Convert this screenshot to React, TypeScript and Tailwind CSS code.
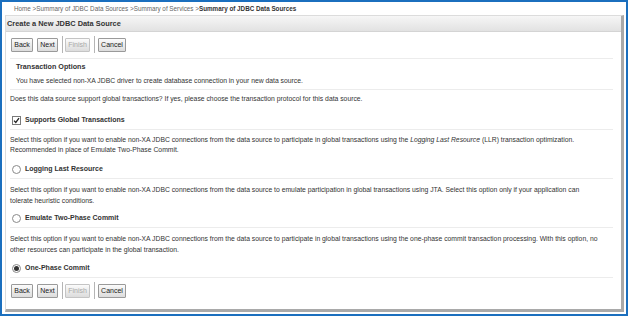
import React from "react";

const Btn = ({ label, w, disabled }: { label: string; w: string; disabled?: boolean }) => (
  <div
    className={`${w} h-[14px] flex items-center justify-center border border-[#9a9a9a] rounded-[1px] bg-gradient-to-b from-[#fbfbfb] to-[#dcdcdc] text-[7px] ${
      disabled ? "text-[#a8a8a8] border-[#c4c4c4]" : "text-[#222]"
    }`}
  >
    {label}
  </div>
);

const Sep = ({ cls }: { cls: string }) => <div className={`w-px h-[17px] bg-[#b5b5b5] ${cls}`} />;

const Buttons = () => (
  <div className="flex items-center pl-[1px]">
    <Btn label="Back" w="w-[22px]" />
    <div className="w-[4px]" />
    <Btn label="Next" w="w-[21px]" />
    <Sep cls="ml-[4px] mr-[2px]" />
    <Btn label="Finish" w="w-[25px]" disabled />
    <Sep cls="ml-[4px] mr-[3px]" />
    <Btn label="Cancel" w="w-[28px]" />
  </div>
);

const Radio = ({ checked }: { checked?: boolean }) => (
  <div className="w-[9px] h-[9px] rounded-full border border-[#8a8a8a] bg-white flex items-center justify-center">
    {checked && <div className="w-[5px] h-[5px] rounded-full bg-[#333]" />}
  </div>
);

const Line = ({ mt }: { mt: string }) => <div className={`${mt} h-px bg-[#ececec] mr-[4px]`} />;

export default function App() {
  return (
    <div
      className="w-[628px] h-[316px] border-2 border-[#1b6fbe] bg-white overflow-hidden text-[#333]"
      style={{ fontFamily: '"Liberation Sans", Arial, sans-serif' }}
    >
      <div className="h-[13px] pl-[12px] flex items-center text-[6.3px] text-[#666]">
        Home &gt;Summary of JDBC Data Sources &gt;Summary of Services &gt;
        <span className="font-bold text-[#333]">Summary of JDBC Data Sources</span>
      </div>
      <div className="ml-[3px] mr-[2px] h-[297px] border-t border-l border-[#dcdcdc] border-r-[3px] border-r-[#a9a9a9] border-b-[3px] border-b-[#a9a9a9] flex flex-col">
        <div className="h-[16px] shrink-0 bg-gradient-to-b from-[#f6f6f6] to-[#e2e2e2] border-b border-[#d4d4d4] flex items-center pl-[1px] text-[7.4px] font-bold text-[#333]">
          Create a New JDBC Data Source
        </div>
        <div className="px-[4px] text-[6.8px] leading-[10px]">
          <div className="mt-[4px]">
            <Buttons />
          </div>
          <Line mt="mt-[5px]" />
          <div className="mt-[3px] pl-[6px] font-bold text-[7.2px]">Transaction Options</div>
          <div className="mt-[4px] pl-[6px]">
            You have selected non-XA JDBC driver to create database connection in your new data source.
          </div>
          <Line mt="mt-[3px]" />
          <div className="mt-[4px]">
            Does this data source support global transactions? If yes, please choose the transaction protocol for this data source.
          </div>
          <div className="mt-[11px] h-[10px] flex items-center gap-[4px] pl-[2px] font-bold text-[7px]">
            <div className="w-[9px] h-[9px] border border-[#7a7a7a] bg-white flex items-center justify-center">
              <svg width="7" height="7" viewBox="0 0 7 7">
                <path d="M1 3.6 L2.8 5.5 L6 1.2" fill="none" stroke="#222" strokeWidth="1.3" />
              </svg>
            </div>
            Supports Global Transactions
          </div>
          <Line mt="mt-[4px]" />
          <div className="mt-[5px] leading-[10px]">
            Select this option if you want to enable non-XA JDBC connections from the data source to participate in global transactions using the{" "}
            <i>Logging Last Resource</i> (LLR) transaction optimization.
            <br />
            Recommended in place of Emulate Two-Phase Commit.
          </div>
          <div className="mt-[9px] h-[10px] flex items-center gap-[4px] pl-[2px] font-bold text-[7px]">
            <Radio />
            Logging Last Resource
          </div>
          <Line mt="mt-[4px]" />
          <div className="mt-[5px] leading-[11px]">
            Select this option if you want to enable non-XA JDBC connections from the data source to emulate participation in global transactions using JTA. Select this option only if your application can
            <br />
            tolerate heuristic conditions.
          </div>
          <div className="mt-[7px] h-[10px] flex items-center gap-[4px] pl-[2px] font-bold text-[7px]">
            <Radio />
            Emulate Two-Phase Commit
          </div>
          <Line mt="mt-[4px]" />
          <div className="mt-[5px] leading-[11px]">
            Select this option if you want to enable non-XA JDBC connections from the data source to participate in global transactions using the one-phase commit transaction processing. With this option, no
            <br />
            other resources can participate in the global transaction.
          </div>
          <div className="mt-[8px] h-[10px] flex items-center gap-[4px] pl-[2px] font-bold text-[7px]">
            <Radio checked />
            One-Phase Commit
          </div>
          <Line mt="mt-[4px]" />
          <div className="mt-[4px]">
            <Buttons />
          </div>
        </div>
      </div>
    </div>
  );
}
